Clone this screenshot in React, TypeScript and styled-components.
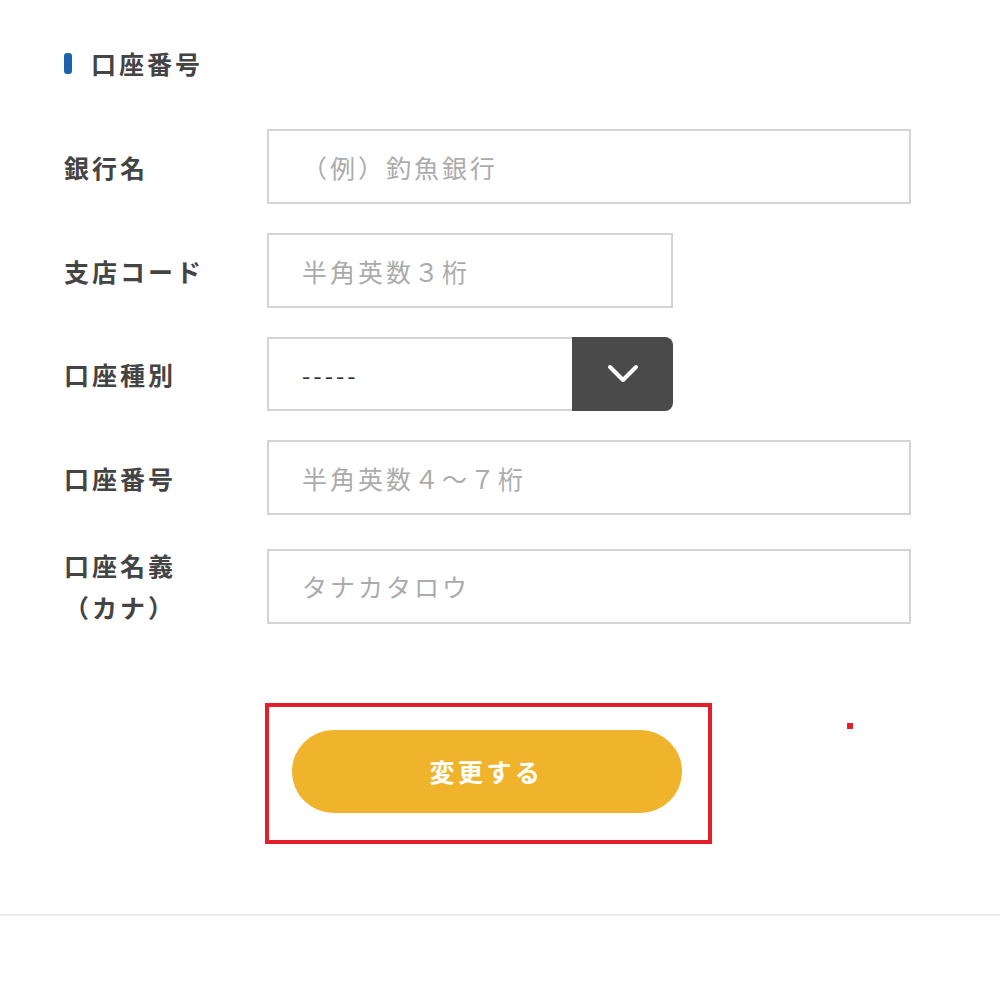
import React from "react";
import styled, { createGlobalStyle } from "styled-components";

const GlobalStyle = createGlobalStyle`
  html, body { margin: 0; padding: 0; background: #fff; }
  body { font-family: "Noto Sans CJK JP", "Noto Sans", sans-serif; color: #444; }
  * { box-sizing: border-box; }
`;

const Page = styled.div`
  width: 1000px;
  min-height: 993px;
  background: #fff;
`;

const Section = styled.section`
  padding: 48px 89px 0 64px;
`;

const Heading = styled.h2`
  display: flex;
  align-items: center;
  gap: 19px;
  margin: 0 0 51px;
  height: 30px;
  font-size: 25px;
  font-weight: 700;
  letter-spacing: 3px;
  line-height: 30px;
  color: #444;
`;

const HeadingBar = styled.span`
  display: block;
  width: 8px;
  height: 21px;
  border-radius: 3px;
  background: #1b64ad;
`;

const Form = styled.div`
  display: flex;
  flex-direction: column;
  gap: 29px;
`;

const Row = styled.div`
  display: grid;
  grid-template-columns: 203px 1fr;
  align-items: center;
`;

const Label = styled.div`
  font-size: 25px;
  font-weight: 700;
  letter-spacing: 3px;
  line-height: 42px;
  color: #444;
`;

const Input = styled.input<{ $w?: number }>`
  display: block;
  width: ${(p) => (p.$w ? `${p.$w}px` : "100%")};
  height: 75px;
  border: 2px solid #d4d4d4;
  border-radius: 0;
  padding: 0 0 0 33px;
  font-family: "Noto Sans CJK JP", sans-serif;
  font-size: 25px;
  letter-spacing: 3px;
  color: #333;
  background: #fff;
  outline: none;
  &::placeholder { color: #ababab; }
`;

const Select = styled.div`
  display: flex;
  width: 406px;
  height: 74px;
`;

const SelectValue = styled.div`
  flex: 1;
  display: flex;
  align-items: center;
  padding-left: 33px;
  border: 2px solid #d4d4d4;
  border-right: none;
  font-size: 24px;
  letter-spacing: 3px;
  color: #333;
`;

const SelectButton = styled.div`
  width: 101px;
  display: flex;
  align-items: center;
  justify-content: center;
  background: #4a4a4a;
  border-radius: 0 8px 8px 0;
`;

const ButtonArea = styled.div`
  position: relative;
  margin: 75px 0 0 201px;
  width: 447px;
  height: 141px;
  border: 4px solid #e3202a;
  display: flex;
  align-items: center;
  justify-content: center;
  padding: 0 4px 5px 0;
`;

const SubmitButton = styled.button`
  width: 390px;
  height: 83px;
  border: none;
  border-radius: 42px;
  background: #f0b32c;
  color: #fff;
  font-family: "Noto Sans CJK JP", sans-serif;
  font-size: 25px;
  font-weight: 700;
  letter-spacing: 3.5px;
  cursor: pointer;
`;

const Marker = styled.span`
  position: absolute;
  left: 578px;
  top: 16px;
  width: 6px;
  height: 6px;
  background: #e3202a;
`;

const Divider = styled.hr`
  margin: 70px 0 0;
  border: none;
  height: 2px;
  background: #ececec;
`;

export default function App() {
  return (
    <Page>
      <GlobalStyle />
      <Section>
        <Heading>
          <HeadingBar />
          口座番号
        </Heading>
        <Form>
          <Row>
            <Label>銀行名</Label>
            <Input placeholder="（例）釣魚銀行" />
          </Row>
          <Row>
            <Label>支店コード</Label>
            <Input $w={406} placeholder="半角英数３桁" />
          </Row>
          <Row>
            <Label>口座種別</Label>
            <Select>
              <SelectValue>-----</SelectValue>
              <SelectButton>
                <svg width="32" height="20" viewBox="0 0 32 20" fill="none">
                  <polyline
                    points="3,3 16,16 29,3"
                    stroke="#fff"
                    strokeWidth="4"
                    strokeLinecap="round"
                    strokeLinejoin="round"
                  />
                </svg>
              </SelectButton>
            </Select>
          </Row>
          <Row>
            <Label>口座番号</Label>
            <Input placeholder="半角英数４～７桁" />
          </Row>
          <Row>
            <Label>
              口座名義
              <br />
              （カナ）
            </Label>
            <Input placeholder="タナカタロウ" />
          </Row>
        </Form>
        <ButtonArea>
          <SubmitButton type="button">変更する</SubmitButton>
          <Marker />
        </ButtonArea>
      </Section>
      <Divider />
    </Page>
  );
}
